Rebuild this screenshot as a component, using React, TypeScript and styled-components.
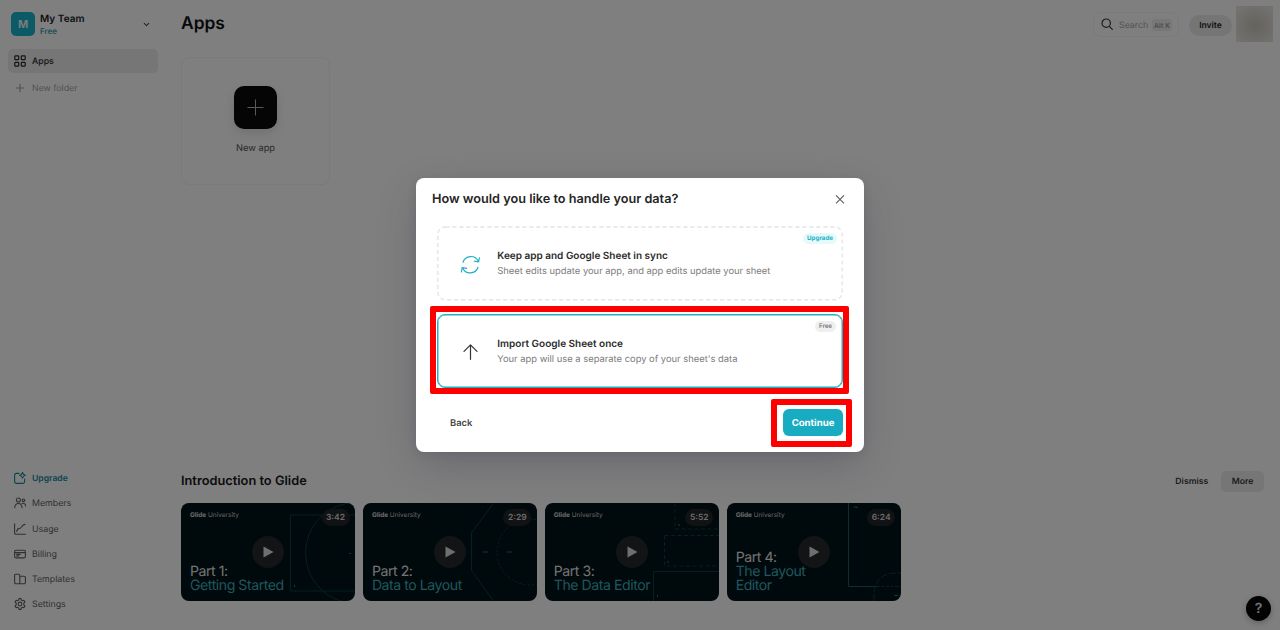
import React from "react";
import styled, { createGlobalStyle, css } from "styled-components";

const GlobalStyle = createGlobalStyle`
  *, *::before, *::after { box-sizing: border-box; }
  body { margin: 0; font-family: Inter, "Liberation Sans", sans-serif; background: #fff; color: #1c1c1c; text-rendering: geometricPrecision; }
  button { font: inherit; color: inherit; border: 0; background: none; padding: 0; letter-spacing: inherit; text-rendering: inherit; }
  svg { display: block; flex: none; }
`;

const Screen = styled.div`
  position: relative;
  display: flex;
  width: 1280px;
  height: 630px;
  overflow: hidden;
`;

/* ---------- sidebar ---------- */

const Sidebar = styled.aside`
  display: flex;
  flex-direction: column;
  width: 165px;
  padding: 12px 8px 13.6px;
`;

const TeamSwitcher = styled.div`
  display: flex;
  align-items: center;
  height: 24px;
  padding: 0 6px 0 3px;
`;

const TeamAvatar = styled.div`
  width: 24px;
  height: 24px;
  border-radius: 5px;
  background: #18b4cb;
  color: #e8f8fa;
  font-size: 11px;
  font-weight: 700;
  line-height: 24px;
  text-align: center;
`;

const TeamInfo = styled.div`
  flex: 1;
  margin-left: 5px;
  padding-top: 1px;
`;

const TeamName = styled.div`
  font-size: 10px;
  font-weight: 600;
  line-height: 13px;
  letter-spacing: 0.05px;
`;

const TeamPlan = styled.div`
  color: #1690a5;
  font-size: 8px;
  font-weight: 500;
  line-height: 11px;
`;

const Chevron = styled.span`
  color: #4a4a4a;
`;

const Nav = styled.nav<{ $bottom?: boolean }>`
  display: flex;
  flex-direction: column;
  gap: ${(p) => (p.$bottom ? "1.3px" : "3px")};
  margin-top: ${(p) => (p.$bottom ? "auto" : "13px")};
`;

const NavItem = styled.a<{ $tone?: "active" | "muted" | "accent" }>`
  display: flex;
  align-items: center;
  gap: 6px;
  height: 24px;
  width: 149.5px;
  padding-left: 6px;
  border-radius: 5px;
  color: #606060;
  font-size: 8.8px;
  line-height: 12px;
  ${(p) => p.$tone === "active" && css`background: #ececec; color: #2a2a2a; font-weight: 500;`}
  ${(p) => p.$tone === "muted" && css`color: #a5a5a5;`}
  ${(p) => p.$tone === "accent" && css`color: #128a9d; font-size: 8.6px; font-weight: 600;`}
`;

const NavLabel = styled.span`
  padding-top: 2px;
`;

/* ---------- main ---------- */

const Main = styled.main`
  display: flex;
  flex: 1;
  flex-direction: column;
  padding: 6px 7px 29px 16px;
`;

const TopBar = styled.header`
  display: flex;
  align-items: center;
  height: 36px;
`;

const PageTitle = styled.h1`
  flex: 1;
  margin: -1px 0 0;
  color: #111;
  font-size: 17.4px;
  font-weight: 600;
  line-height: 24px;
`;

const SearchBox = styled.div`
  display: flex;
  align-items: center;
  width: 86px;
  height: 25px;
  padding: 0 6px 0 7px;
  border: 1px solid #f5f5f5;
  border-radius: 8px;
  color: #3a3a3a;
  font-size: 8.8px;
`;

const SearchLabel = styled.span`
  flex: 1;
  margin-left: 6px;
  padding-top: 2px;
  color: #a6a6a6;
`;

const KeyHint = styled.kbd`
  height: 12px;
  margin-top: 1px;
  padding: 0 2px;
  border-radius: 3px;
  background: #eee;
  color: #929292;
  font: 500 7px/13px Inter, sans-serif;
  white-space: nowrap;
`;

const InviteButton = styled.button`
  width: 43px;
  height: 21px;
  margin: 3px 4px 0 10px;
  padding-top: 1px;
  border-radius: 11px;
  background: #eaeaea;
  font-size: 8.5px;
  font-weight: 600;
`;

const Profile = styled.div`
  width: 37px;
  height: 36px;
  background: radial-gradient(circle at 52% 55%, #cdc9bf 5%, #d9d6cf 45%, #e7e5e2 85%);
`;

const NewAppCard = styled.button`
  display: flex;
  flex-direction: column;
  align-items: center;
  width: 149px;
  height: 128px;
  margin-top: 15px;
  padding-top: 28.3px;
  border: 1px solid #f4f4f4;
  border-radius: 8px;
  color: #525252;
  font-size: 9.3px;
  line-height: 12px;
`;

const NewAppIcon = styled.span`
  display: grid;
  place-items: center;
  width: 43px;
  height: 43px;
  margin-bottom: 13.7px;
  border-radius: 10px;
  background: #0a0a0a;
  box-shadow: 0 4px 12px rgba(0, 0, 0, 0.12);
`;

const IntroHeader = styled.div`
  display: flex;
  align-items: center;
  margin-top: auto;
  padding-right: 9px;
`;

const IntroTitle = styled.h2`
  flex: 1;
  margin: 0;
  color: #181818;
  font-size: 12.8px;
  font-weight: 600;
`;

const SmallButton = styled.button<{ $filled?: boolean }>`
  height: 21px;
  padding: 0 ${(p) => (p.$filled ? "10.5px" : "13px")};
  border-radius: 5px;
  background: ${(p) => (p.$filled ? "#ececec" : "transparent")};
  color: #3b3b3b;
  font-size: 8.7px;
  font-weight: 600;
`;

const VideoRow = styled.div`
  display: flex;
  gap: 7.9px;
  margin-top: 11px;
`;

const VideoCard = styled.article`
  display: grid;
  width: 174px;
  height: 98px;
  border-radius: 8px;
  overflow: hidden;
  background: #001217;
  color: #e6e6e6;
  & > * { grid-area: 1 / 1; }
`;

const VideoText = styled.div`
  display: flex;
  flex-direction: column;
  justify-content: space-between;
  padding: 8px 9px 7.6px;
`;

const Brand = styled.div`
  color: #c6c6c6;
  font-size: 6.5px;
  line-height: 8px;
  b { font-weight: 800; letter-spacing: -0.1px; }
`;

const VideoTitle = styled.div`
  font-size: 14.1px;
  font-weight: 400;
  line-height: 14px;
  letter-spacing: -0.45px;
`;

const VideoTopic = styled.div`
  color: #3cadbd;
  white-space: pre-line;
`;

const PlayBadge = styled.div`
  display: grid;
  place-items: center;
  place-self: center;
  width: 32px;
  height: 32px;
  border-radius: 50%;
  background: #25292b;
`;

const Duration = styled.div`
  place-self: start end;
  width: 28px;
  height: 17px;
  margin: 5.5px 5.5px 0 0;
  border-radius: 9px;
  background: #202427;
  color: #d6d6d6;
  font-size: 8.5px;
  font-weight: 600;
  line-height: 18px;
  text-align: center;
`;

const HelpButton = styled.button`
  position: absolute;
  right: 9px;
  bottom: 9px;
  width: 25px;
  height: 25px;
  border-radius: 50%;
  background: #070707;
  color: #e4e4e4;
  font-size: 14px;
  font-weight: 600;
  line-height: 25px;
  box-shadow: 0 2px 6px rgba(0, 0, 0, 0.25);
`;

/* ---------- dialog ---------- */

const Overlay = styled.div`
  position: absolute;
  inset: 0;
  display: grid;
  place-items: center;
  background: rgba(0, 0, 0, 0.5);
`;

const Dialog = styled.section`
  display: flex;
  flex-direction: column;
  width: 448px;
  height: 274px;
  padding: 12px 16px 16px;
  border-radius: 8px;
  background: #fff;
  box-shadow: 0 14px 40px -4px rgba(50, 50, 75, 0.3), 0 2px 8px rgba(40, 40, 60, 0.12);
`;

const DialogHeader = styled.header`
  display: flex;
  align-items: center;
  justify-content: space-between;
  height: 18px;
  padding-right: 3px;
`;

const DialogTitle = styled.h2`
  margin: 0;
  padding-top: 2px;
  color: #252525;
  font-size: 12.7px;
  font-weight: 600;
  line-height: 18px;
`;

const Options = styled.div`
  display: flex;
  flex-direction: column;
  gap: 14px;
  margin-top: 18px;
  padding: 0 5px;
`;

const Option = styled.div<{ $selected?: boolean }>`
  position: relative;
  display: flex;
  align-items: center;
  width: 406px;
  height: 74px;
  padding-left: ${(p) => (p.$selected ? "23px" : "23px")};
  border: 0 solid #20b0c4;
  border-width: ${(p) => (p.$selected ? "1px" : "0")};
  box-shadow: ${(p) => (p.$selected ? "inset 0 0 0 0.5px #20b0c4" : "none")};
  border-radius: 8px;
`;

const DashedBorder = styled.svg`
  position: absolute;
  inset: 0;
`;

const OptionText = styled.div`
  margin-left: 16.3px;
  padding-top: 2.6px;
`;

const OptionTitle = styled.div`
  color: #2b2b2b;
  font-size: 10px;
  font-weight: 600;
  line-height: 15px;
`;

const OptionNote = styled.div`
  color: #7c7c7c;
  font-size: 9.4px;
  line-height: 15.4px;
`;

const Tag = styled.span<{ $accent?: boolean }>`
  position: absolute;
  top: ${(p) => (p.$accent ? "6.5px" : "6px")};
  right: 6px;
  height: 11px;
  padding: 0 4px;
  border-radius: 6px;
  background: ${(p) => (p.$accent ? "#e6fafc" : "#efefef")};
  color: ${(p) => (p.$accent ? "#20b0c4" : "#6c6c6c")};
  font-size: 6.2px;
  font-weight: ${(p) => (p.$accent ? 700 : 500)};
  line-height: 11px;
`;

const DialogFooter = styled.footer`
  display: flex;
  align-items: center;
  justify-content: space-between;
  margin-top: auto;
  padding: 0 5px 0 18px;
`;

const BackButton = styled.button`
  padding-top: 2px;
  color: #484848;
  font-size: 9.4px;
  font-weight: 600;
`;

const ContinueButton = styled.button`
  position: relative;
  width: 60px;
  height: 27px;
  padding-top: 1px;
  border-radius: 6px;
  background: #18acc2;
  color: #fff;
  font-size: 9.6px;
  font-weight: 700;
`;

const Highlight = styled.span<{ $inset: string }>`
  position: absolute;
  inset: ${(p) => p.$inset};
  border: 6px solid #fe0000;
  border-radius: 2px;
  pointer-events: none;
`;

/* ---------- icons ---------- */

const Icon = ({ children, size = 12, width = 1 }: { children: React.ReactNode; size?: number; width?: number }) => (
  <svg width={size} height={size} viewBox="0 0 12 12" fill="none" stroke="currentColor" strokeWidth={width} strokeLinecap="round" strokeLinejoin="round">
    {children}
  </svg>
);

const gearPoints = "M5 .6h2l.4 1.5 1 .6 1.5-.5 1 1.8L9.8 5.1v1.8l1.1 1.1-1 1.8-1.5-.5-1 .6L7 11.4H5l-.4-1.5-1-.6-1.5.5-1-1.8 1.1-1.1V5.1L1.1 4l1-1.8 1.5.5 1-.6z";

const footerNav = [
  { label: "Upgrade", tone: "accent" as const, icon: <><path d="M5 1.4H2.4A1.8 1.8 0 0 0 .6 3.2v6.4a1.8 1.8 0 0 0 1.8 1.8h6.4a1.8 1.8 0 0 0 1.8-1.8V7" /><path d="M8.5.4c.4 1.8 1.1 2.5 2.9 2.9-1.8.4-2.5 1.1-2.9 2.9-.4-1.8-1.1-2.5-2.9-2.9C7.4 2.9 8.1 2.2 8.5.4z" /></> },
  { label: "Members", icon: <><circle cx="4.4" cy="3" r="2" /><circle cx="9.5" cy="3.3" r="1.3" /><path d="M.7 10.7c.2-2.7 1.5-4.2 3.7-4.2s3.5 1.5 3.7 4.2M8 6.5c2-.7 3.4.3 3.6 2.5" /></> },
  { label: "Usage", icon: <path d="M.6.8v9.4a1 1 0 0 0 1 1h9.8M2.7 8.5c.5-2 1.2-2.9 2.2-2.9 1.2 0 1.9-.1 2.5-1.5S9 1.7 11 1.4" /> },
  { label: "Billing", icon: <><rect x=".6" y="2.3" width="10.8" height="7.6" rx="1.5" /><path d="M.8 4.7h10.4M2.7 6.3h3.5M2.7 7.9h2" strokeWidth="1.2" /></> },
  { label: "Templates", icon: <path d="M5.8 10.8V4.5A1.2 1.2 0 0 1 7 3.3h3.2a1.2 1.2 0 0 1 1.2 1.2v5.1a1.2 1.2 0 0 1-1.2 1.2H1.8A1.2 1.2 0 0 1 .6 9.6V2.4a1.2 1.2 0 0 1 1.2-1.2h2.8a1.2 1.2 0 0 1 1.2 1.2v2.1" /> },
  { label: "Settings", icon: <><path d={gearPoints} /><circle cx="6" cy="6" r="1.9" /></> },
];

const videos = [
  {
    part: "Part 1:", title: "Getting Started", time: "3:42",
    art: <><path d="M175 12H109.5V88H175" /><circle cx="175" cy="50" r="50.5" /><path d="M168 50.5h2M113.5 84v-2" stroke="#2a8390" /></>,
  },
  {
    part: "Part 2:", title: "Data to Layout", time: "2:29",
    art: <><path d="M130.5 0L108.5 30V67.5L130.5 98" /><circle cx="167" cy="49" r="33" strokeDasharray="2.5 1.8" /><path d="M120 49h5M144 49h5" stroke="#2a8390" /></>,
  },
  {
    part: "Part 3:", title: "The Data Editor", time: "5:52",
    art: <><path d="M130 0V26H175M119.5 32.5H175M119.5 32.5V63H175" strokeDasharray="4 2.5" /><path d="M175 68.5H108.5V98" /><path d="M123 60v-2M112.5 94v-2M134 23v-2" stroke="#2a8390" /></>,
  },
  {
    part: "Part 4:", title: "The Layout\nEditor", time: "6:24",
    art: <><path d="M121.5 0V83.5H150" stroke="#1c6670" /><path d="M150 83.5h24" strokeDasharray="3 1.5" /><path d="M147 98v-5q0-23 23-23h5" strokeDasharray="7 1.5" /><path d="M127 4h3v1M167 92.5h4" stroke="#2a8390" /></>,
  },
];

export default function App() {
  return (
    <Screen>
      <GlobalStyle />
      <Sidebar>
        <TeamSwitcher>
          <TeamAvatar>M</TeamAvatar>
          <TeamInfo>
            <TeamName>My Team</TeamName>
            <TeamPlan>Free</TeamPlan>
          </TeamInfo>
          <Chevron>
            <Icon size={9} width={1.4}><path d="M3 4.5L6 7.5l3-3" /></Icon>
          </Chevron>
        </TeamSwitcher>
        <Nav>
          <NavItem $tone="active">
            <Icon width={1.2}>
              <rect x=".8" y=".8" width="3.9" height="3.9" rx=".7" />
              <rect x="7.3" y=".8" width="3.9" height="3.9" rx=".7" />
              <rect x=".8" y="7.3" width="3.9" height="3.9" rx=".7" />
              <rect x="7.3" y="7.3" width="3.9" height="3.9" rx=".7" />
            </Icon>
            <NavLabel>Apps</NavLabel>
          </NavItem>
          <NavItem $tone="muted">
            <Icon width={1.2}><path d="M6 2.2v7.6M2.2 6h7.6" /></Icon>
            <NavLabel>New folder</NavLabel>
          </NavItem>
        </Nav>
        <Nav $bottom>
          {footerNav.map((item) => (
            <NavItem key={item.label} $tone={item.tone}>
              <Icon width={1.1}>{item.icon}</Icon>
              <NavLabel>{item.label}</NavLabel>
            </NavItem>
          ))}
        </Nav>
      </Sidebar>

      <Main>
        <TopBar>
          <PageTitle>Apps</PageTitle>
          <SearchBox>
            <Icon width={1.2}><circle cx="5.2" cy="5.2" r="4.2" /><path d="M8.3 8.3l3 3" /></Icon>
            <SearchLabel>Search</SearchLabel>
            <KeyHint>Alt K</KeyHint>
          </SearchBox>
          <InviteButton>Invite</InviteButton>
          <Profile />
        </TopBar>

        <NewAppCard>
          <NewAppIcon>
            <svg width="17" height="17" viewBox="0 0 17 17" stroke="#b5b5b5" strokeWidth="1"><path d="M8.5 .5v16M.5 8.5h16" /></svg>
          </NewAppIcon>
          New app
        </NewAppCard>

        <IntroHeader>
          <IntroTitle>Introduction to Glide</IntroTitle>
          <SmallButton>Dismiss</SmallButton>
          <SmallButton $filled>More</SmallButton>
        </IntroHeader>
        <VideoRow>
          {videos.map((video) => (
            <VideoCard key={video.time}>
              <svg width="174" height="98" fill="none" stroke="#0f454d" strokeWidth=".9">{video.art}</svg>
              <VideoText>
                <Brand><b>Glide</b> University</Brand>
                <VideoTitle>
                  {video.part}
                  <VideoTopic>{video.title}</VideoTopic>
                </VideoTitle>
              </VideoText>
              <PlayBadge>
                <svg width="12" height="12" viewBox="0 0 12 12" fill="#dedede"><path d="M1.5 .5L11.5 6L1.5 11.5z" /></svg>
              </PlayBadge>
              <Duration>{video.time}</Duration>
            </VideoCard>
          ))}
        </VideoRow>
      </Main>
      <HelpButton>?</HelpButton>

      <Overlay>
        <Dialog>
          <DialogHeader>
            <DialogTitle>How would you like to handle your data?</DialogTitle>
            <svg width="10" height="10" viewBox="0 0 10 10" stroke="#5c5c5c" strokeWidth="1.1"><path d="M1 1.3l8 8M9 1.3L1 9.3" /></svg>
          </DialogHeader>
          <Options>
            <Option>
              <DashedBorder width="406" height="75" fill="none" stroke="#e5e5e5" strokeWidth="1.4" strokeDasharray="4.2 2.8">
                <rect x=".8" y="1" width="404.4" height="72.8" rx="7.5" />
              </DashedBorder>
              <svg width="21" height="21" viewBox="0 -1.2 21 21" fill="none" stroke="#20b0c4" strokeWidth="1.2" strokeLinecap="round" strokeLinejoin="round">
                <path d="M3 8A8.2 8.2 0 0 1 18.3 7.2M18 13A8.2 8.2 0 0 1 2.7 13.8M19.4 3.6l-.8 4.2-4.2-.9M1.4 17.7l.8-4.4 4.4.8" />
              </svg>
              <OptionText>
                <OptionTitle>Keep app and Google Sheet in sync</OptionTitle>
                <OptionNote>Sheet edits update your app, and app edits update your sheet</OptionNote>
              </OptionText>
              <Tag $accent>Upgrade</Tag>
            </Option>
            <Option $selected>
              <svg width="20" height="20" viewBox="0 -0.8 20 20" fill="none" stroke="#333" strokeWidth="1.2" strokeLinecap="round" strokeLinejoin="round">
                <path d="M9.5 17.5V3M3 9.5L9.5 3L16 9.5" />
              </svg>
              <OptionText>
                <OptionTitle>Import Google Sheet once</OptionTitle>
                <OptionNote>Your app will use a separate copy of your sheet's data</OptionNote>
              </OptionText>
              <Tag>Free</Tag>
              <Highlight $inset="-9px -7px -7px -8px" />
            </Option>
          </Options>
          <DialogFooter>
            <BackButton>Back</BackButton>
            <ContinueButton>
              Continue
              <Highlight $inset="-10px -9px -11px -12px" />
            </ContinueButton>
          </DialogFooter>
        </Dialog>
      </Overlay>
    </Screen>
  );
}
